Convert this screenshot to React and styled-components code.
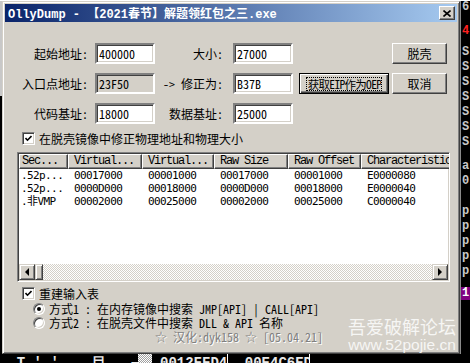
import styled, { createGlobalStyle } from 'styled-components';

const UI_FONT = `"Noto Sans Mono CJK SC", "Noto Sans CJK SC", "Liberation Mono", monospace`;
const DATA_FONT = `"DejaVu Sans Mono", "Noto Sans CJK SC", monospace`;
const FACE = '#d4d0c8';

const GlobalStyle = createGlobalStyle`
  html, body { margin: 0; padding: 0; background: #000; }
  body { width: 470px; height: 363px; overflow: hidden; }
  * { box-sizing: border-box; }
`;

const Desk = styled.div`
  width: 470px;
  height: 363px;
  display: flex;
  flex-direction: column;
  background: #000;
  overflow: hidden;
`;

const TopStrip = styled.div`
  height: 1px;
  background: #fff;
  flex: none;
`;

const Middle = styled.div`
  display: flex;
  height: 353px;
  flex: none;
`;

const LeftStrip = styled.div`
  width: 2px;
  background: linear-gradient(#c8c8c8 0 95px, #000 95px);
`;

const Window = styled.div`
  position: relative;
  width: 458px;
  height: 353px;
  background: ${FACE};
  border: 1px solid;
  border-color: ${FACE} #404040 #404040 ${FACE};
  box-shadow: inset 1px 1px #fff, inset -1px -1px #808080;
  padding: 2px;
  display: flex;
  flex-direction: column;
  font-family: ${UI_FONT};
  font-size: 12px;
  color: #000;
`;

const TitleBar = styled.div`
  height: 18px;
  flex: none;
  display: flex;
  align-items: center;
  padding: 0 2px 0 3px;
  background: linear-gradient(90deg, #0a246a, #a6caf0);
  color: #fff;
  font-family: "Liberation Mono", "Noto Sans CJK SC", monospace;
  font-weight: bold;
  font-size: 12px;
  white-space: nowrap;
`;

const TitleText = styled.span`
  flex: 1;
  overflow: hidden;
`;

const CloseBox = styled.div`
  width: 16px;
  height: 14px;
  background: ${FACE};
  border: 1px solid;
  border-color: #fff #404040 #404040 #fff;
  box-shadow: inset -1px -1px #808080;
  display: flex;
  align-items: center;
  justify-content: center;
`;

const Client = styled.div`
  display: flex;
  flex-direction: column;
  flex: 1;
`;

const Form = styled.div`
  margin-top: 21px;
  display: grid;
  grid-template-columns: 90px 60px 78px 60px 96px 58px;
  grid-auto-rows: 21px;
  row-gap: 9px;
  align-items: center;
`;

const Label = styled.div`
  text-align: right;
  padding-right: ${({ $pr }) => $pr}px;
  white-space: nowrap;
  line-height: 21px;
`;

const Field = styled.div`
  height: 21px;
  border: 2px solid;
  border-color: #808080 #fff #fff #808080;
  box-shadow: inset 1px 1px #404040, inset -1px -1px ${FACE};
  background: ${({ $disabled }) => ($disabled ? FACE : '#fff')};
  padding: 0 2px;
  line-height: 17px;
  white-space: nowrap;
`;

const Button = styled.div`
  justify-self: end;
  width: ${({ $w }) => $w}px;
  height: 21px;
  border: 1px solid;
  border-color: ${({ $default }) => ($default ? '#000' : '#fff #404040 #404040 #fff')};
  box-shadow: ${({ $default }) =>
    $default
      ? 'inset 1px 1px #fff, inset -1px -1px #404040, inset -2px -2px #808080'
      : 'inset -1px -1px #808080'};
  display: flex;
  align-items: center;
  justify-content: center;
  white-space: nowrap;
  overflow: hidden;
  padding: ${({ $default }) => ($default ? '3px 2px' : '0')};
`;

const FocusRect = styled.span`
  border: 1px dotted #000;
  line-height: 12px;
  font-size: 11.5px;
  letter-spacing: -0.7px;
  padding-left: 1px;
  display: block;
  overflow: hidden;
`;

const CheckRow = styled.div`
  display: flex;
  flex: none;
  align-items: center;
  gap: 4px;
  height: ${({ $h }) => $h}px;
  margin-top: ${({ $mt }) => $mt}px;
  padding-left: ${({ $pl }) => $pl}px;
  line-height: ${({ $h }) => $h}px;
  white-space: nowrap;
`;

const CheckBox = styled.div`
  width: 13px;
  height: 13px;
  flex: none;
  border: 1px solid;
  border-color: #808080 #fff #fff #808080;
  box-shadow: inset 1px 1px #404040, inset -1px -1px ${FACE};
  background: #fff;
  display: flex;
  align-items: center;
  justify-content: center;
`;

const Radio = styled.div`
  width: 12px;
  height: 12px;
  flex: none;
  border-radius: 50%;
  background: #fff;
  border: 1px solid;
  border-color: #808080 #fff #fff #808080;
  box-shadow: inset 1px 1px #404040, inset -1px -1px ${FACE};
  display: flex;
  align-items: center;
  justify-content: center;
  &::after {
    content: '';
    width: 4px;
    height: 4px;
    border-radius: 50%;
    background: ${({ $on }) => ($on ? '#000' : 'transparent')};
  }
`;

const ListView = styled.div`
  margin: 7px 0 0 12px;
  width: 433px;
  height: 130px;
  flex: none;
  border: 1px solid;
  border-color: #808080 #fff #fff #808080;
  box-shadow: inset 1px 1px #404040, inset -1px -1px ${FACE};
  padding: 1px;
  background: #fff;
  display: flex;
  flex-direction: column;
  overflow: hidden;
`;

const cols = [49, 74, 72, 74, 73, 110];

const HeaderRow = styled.div`
  display: flex;
  height: 15px;
  flex: none;
`;

const HeaderCell = styled.div`
  flex: none;
  width: ${({ $w }) => $w}px;
  background: ${FACE};
  border: 1px solid;
  border-color: #fff #404040 #404040 #fff;
  box-shadow: inset -1px -1px #808080;
  padding-left: ${({ $pl }) => $pl}px;
  font-family: "Liberation Mono", monospace;
  font-size: 12px;
  letter-spacing: -1.2px;
  line-height: 13px;
  white-space: nowrap;
  overflow: hidden;
`;

const Body = styled.div`
  flex: 1;
`;

const DataRow = styled.div`
  display: flex;
  height: 13px;
  line-height: 13px;
  font-family: ${DATA_FONT};
  font-size: 11px;
  letter-spacing: -0.6px;
`;

const DataCell = styled.div`
  flex: none;
  width: ${({ $w }) => $w}px;
  padding-left: ${({ $pl }) => $pl}px;
  white-space: nowrap;
  overflow: hidden;
`;

const HScroll = styled.div`
  height: 16px;
  flex: none;
  display: flex;
  background: repeating-conic-gradient(${FACE} 0 25%, #fff 0 50%) 0 0 / 2px 2px;
`;

const ScrollBtn = styled.div`
  width: ${({ $w }) => $w}px;
  height: 16px;
  flex: none;
  background: ${FACE};
  border: 1px solid;
  border-color: ${FACE} #404040 #404040 ${FACE};
  box-shadow: inset 1px 1px #fff, inset -1px -1px #808080;
  display: flex;
  align-items: center;
  justify-content: center;
`;

const Arrow = styled.span`
  width: 0;
  height: 0;
  border-top: 4px solid transparent;
  border-bottom: 4px solid transparent;
  ${({ $dir }) => ($dir === 'left' ? 'border-right: 4px solid #000;' : 'border-left: 4px solid #000;')}
`;

const Track = styled.div`
  flex: 1;
`;

const Credit = styled.div`
  margin: 0 0 0 150px;
  height: 14px;
  line-height: 14px;
  color: #808080;
  text-shadow: 1px 1px 0 #fff;
  white-space: nowrap;
`;

const Watermark = styled.div`
  position: absolute;
  right: 1px;
  bottom: 0;
  width: 112px;
  display: flex;
  flex-direction: column;
  align-items: center;
  color: rgba(255, 255, 255, 0.82);
  pointer-events: none;
`;

const MarkCn = styled.div`
  font-family: "Noto Sans CJK SC", sans-serif;
  font-size: 18px;
  line-height: 19px;
`;

const MarkEn = styled.div`
  font-family: "Liberation Sans", sans-serif;
  font-size: 15.5px;
  line-height: 17px;
`;

const RightStrip = styled.div`
  width: 10px;
  border-left: 1px solid #8a8a8a;
  display: flex;
  flex-direction: column;
  overflow: hidden;
  font-family: "Liberation Mono", monospace;
  font-weight: bold;
  font-size: 12px;
`;

const StripLine = styled.div`
  height: ${({ $h }) => $h}px;
  flex: none;
  line-height: 13px;
  padding-left: 1px;
  color: ${({ $c }) => $c || '#c8c8c8'};
  background: ${({ $bg }) => $bg || 'transparent'};
  white-space: nowrap;
`;

const BottomStrip = styled.div`
  height: 9px;
  flex: none;
  display: flex;
  align-items: flex-start;
  overflow: hidden;
  color: #e8e8e8;
  font-family: "Liberation Mono", monospace;
  font-weight: bold;
  font-size: 14px;
  line-height: 18px;
  white-space: pre;
`;

const Segment = styled.div`
  width: ${({ $w }) => $w}px;
  flex: none;
  overflow: hidden;
  border-right: ${({ $bar }) => ($bar ? '1px solid #fff' : 'none')};
  height: 9px;
`;

const Dither = styled.div`
  width: 14px;
  height: 9px;
  flex: none;
  margin-right: 8px;
  background: repeating-conic-gradient(#a0a0a0 0 25%, #fff 0 50%) 0 0 / 2px 2px;
`;

const rows = [
  ['.52p...', '00017000', '00001000', '00017000', '00001000', 'E0000080'],
  ['.52p...', '0000D000', '00018000', '0000D000', '00018000', 'E0000040'],
  ['.非VMP', '00002000', '00025000', '00002000', '00025000', 'C0000040'],
];

const headers = ['Sec...', 'Virtual...', 'Virtual...', 'Raw Size', 'Raw Offset', 'Characteristics'];

const stripLines = [
  { t: '6:', h: 24 },
  { t: '4', h: 21, c: '#ff2020' },
  { t: 'S', h: 15 }, { t: 'S', h: 15 }, { t: 'S', h: 15 }, { t: 'S', h: 15 },
  { t: 'S', h: 15 }, { t: 'S', h: 15 }, { t: 'S', h: 15 },
  { t: '', h: 9 },
  { t: 'a', h: 15 },
  { t: '0', h: 30 },
  { t: 'p', h: 15 }, { t: 'p', h: 15 }, { t: 'p', h: 15 }, { t: 'p', h: 15 }, { t: 'p', h: 15 },
  { t: '', h: 7 },
  { t: '1', h: 13, c: '#fff', bg: '#800080' },
];

const Check = () => (
  <svg width="7" height="7" viewBox="0 0 7 7">
    <polyline points="0.5,3 2.5,5.2 6.5,1" fill="none" stroke="#000" strokeWidth="1.6" />
  </svg>
);

const CloseGlyph = () => (
  <svg width="8" height="7" viewBox="0 0 8 7">
    <path d="M0.5 0.5 L7.5 6.5 M7.5 0.5 L0.5 6.5" stroke="#000" strokeWidth="1.6" />
  </svg>
);

export default function App() {
  return (
    <>
      <GlobalStyle />
      <Desk>
        <TopStrip />
        <Middle>
          <LeftStrip />
          <Window>
            <TitleBar>
              <TitleText>OllyDump - 【2021春节】解题领红包之三.exe</TitleText>
              <CloseBox>
                <CloseGlyph />
              </CloseBox>
            </TitleBar>
            <Client>
              <Form>
                <Label $pr={7}>起始地址:</Label>
                <Field>400000</Field>
                <Label $pr={10}>大小:</Label>
                <Field>27000</Field>
                <div />
                <Button $w={55}>脱壳</Button>

                <Label $pr={7}>入口点地址:</Label>
                <Field $disabled>23F50</Field>
                <Label $pr={10}>-&gt; 修正为:</Label>
                <Field>B37B</Field>
                <Button $w={90} $default>
                  <FocusRect>获取EIP作为OEP</FocusRect>
                </Button>
                <Button $w={55}>取消</Button>

                <Label $pr={7}>代码基址:</Label>
                <Field>18000</Field>
                <Label $pr={10}>数据基址:</Label>
                <Field>25000</Field>
              </Form>

              <CheckRow $mt={8} $h={13} $pl={17}>
                <CheckBox>
                  <Check />
                </CheckBox>
                在脱壳镜像中修正物理地址和物理大小
              </CheckRow>

              <ListView>
                <HeaderRow>
                  {headers.map((h, i) => (
                    <HeaderCell key={i} $w={cols[i]} $pl={i === 0 ? 2 : 5}>
                      {h}
                    </HeaderCell>
                  ))}
                </HeaderRow>
                <Body>
                  {rows.map((r, ri) => (
                    <DataRow key={ri}>
                      {r.map((c, ci) => (
                        <DataCell key={ci} $w={cols[ci]} $pl={ci === 0 ? 2 : 6}>
                          {c}
                        </DataCell>
                      ))}
                    </DataRow>
                  ))}
                </Body>
                <HScroll>
                  <ScrollBtn $w={16}>
                    <Arrow $dir="left" />
                  </ScrollBtn>
                  <ScrollBtn $w={8} />
                  <Track />
                  <ScrollBtn $w={16}>
                    <Arrow $dir="right" />
                  </ScrollBtn>
                </HScroll>
              </ListView>

              <CheckRow $mt={5} $h={13} $pl={17}>
                <CheckBox>
                  <Check />
                </CheckBox>
                重建输入表
              </CheckRow>
              <CheckRow $mt={2} $h={14} $pl={28}>
                <Radio $on />
                方式1 : 在内存镜像中搜索 JMP[API] | CALL[API]
              </CheckRow>
              <CheckRow $mt={0} $h={14} $pl={28}>
                <Radio />
                方式2 : 在脱壳文件中搜索 DLL &amp; API 名称
              </CheckRow>
              <Credit>☆ 汉化:dyk158 ☆ [05.04.21]</Credit>
            </Client>
            <Watermark>
              <MarkCn>吾爱破解论坛</MarkCn>
              <MarkEn>www.52pojie.cn</MarkEn>
            </Watermark>
          </Window>
          <RightStrip>
            {stripLines.map((l, i) => (
              <StripLine key={i} $h={l.h} $c={l.c} $bg={l.bg}>
                {l.t}
              </StripLine>
            ))}
          </RightStrip>
        </Middle>
        <BottomStrip>
          <Segment $w={138}>{'  T \' \'    目   ───'}</Segment>
          <Dither />
          <Segment $w={68} $bar>{'0012FFD4'}</Segment>
          <Segment $w={82} $bar>{'  00E4C6ED'}</Segment>
        </BottomStrip>
      </Desk>
    </>
  );
}
